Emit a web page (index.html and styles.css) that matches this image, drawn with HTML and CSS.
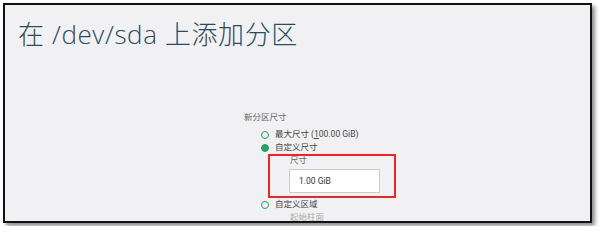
FILE: index.html
```html
<!DOCTYPE html>
<html lang="zh-CN">
<head>
<meta charset="utf-8">
<title>在 /dev/sda 上添加分区</title>
<link rel="stylesheet" href="styles.css">
</head>
<body>
<div class="frame">
  <h1 class="title">在 /dev/sda 上添加分区</h1>
  <div class="form">
    <div class="section-label">新分区尺寸</div>
    <div class="radio-row">
      <span class="radio"></span>
      <span class="radio-text">最大尺寸 (<u>1</u>00.00 GiB)</span>
    </div>
    <div class="radio-row">
      <span class="radio checked"></span>
      <span class="radio-text">自定义尺寸</span>
    </div>
    <div class="highlight">
      <div class="field-label">尺寸</div>
      <div class="input">1.00 GiB</div>
    </div>
    <div class="radio-row">
      <span class="radio"></span>
      <span class="radio-text">自定义区域</span>
    </div>
    <div class="disabled-label">起始柱面</div>
  </div>
</div>
</body>
</html>
```
FILE: styles.css
```css
html, body {
  margin: 0;
  padding: 0;
  background: #ffffff;
}
body {
  padding: 3px;
  font-family: Roboto, "Noto Sans CJK SC", sans-serif;
}
.frame {
  width: 585px;
  height: 216px;
  border: 2px solid #111111;
  background: #f1f1f3;
  box-shadow: 3px 3px 4px rgba(0, 0, 0, 0.45);
  overflow: hidden;
}
.title {
  margin: 14px 0 0 13px;
  font-family: "Open Sans", "Noto Sans CJK SC", sans-serif;
  font-weight: 300;
  font-size: 26px;
  line-height: 30px;
  color: #2c4b5a;
  letter-spacing: 0.6px;
}
.form {
  margin: 62px 0 0 239px;
  font-size: 8.5px;
  color: #555555;
}
.section-label {
  line-height: 12px;
  color: #666666;
  margin-bottom: 5px;
}
.radio-row {
  display: flex;
  align-items: center;
  height: 13px;
  padding-left: 17px;
  gap: 6px;
}
.radio {
  width: 6px;
  height: 6px;
  border: 1.6px solid #2a9d68;
  border-radius: 50%;
  flex: none;
}
.radio.checked {
  background: #2a9d68;
}
.radio-text {
  line-height: 13px;
  color: #444444;
}
.highlight {
  margin-left: 24px;
  border: 2px solid #e5262b;
  padding: 0 0 3px 19px;
  box-sizing: border-box;
  width: 128px;
}
.field-label {
  line-height: 8px;
  padding-left: 1px;
  color: #666666;
}
.input {
  margin-top: 5px;
  width: 91px;
  height: 24px;
  box-sizing: border-box;
  background: #ffffff;
  border: 1px solid #cccccc;
  padding-left: 9px;
  line-height: 22px;
  color: #333333;
}
.disabled-label {
  margin: 0 0 0 46px;
  line-height: 13px;
  color: #aaaaaa;
}
```
